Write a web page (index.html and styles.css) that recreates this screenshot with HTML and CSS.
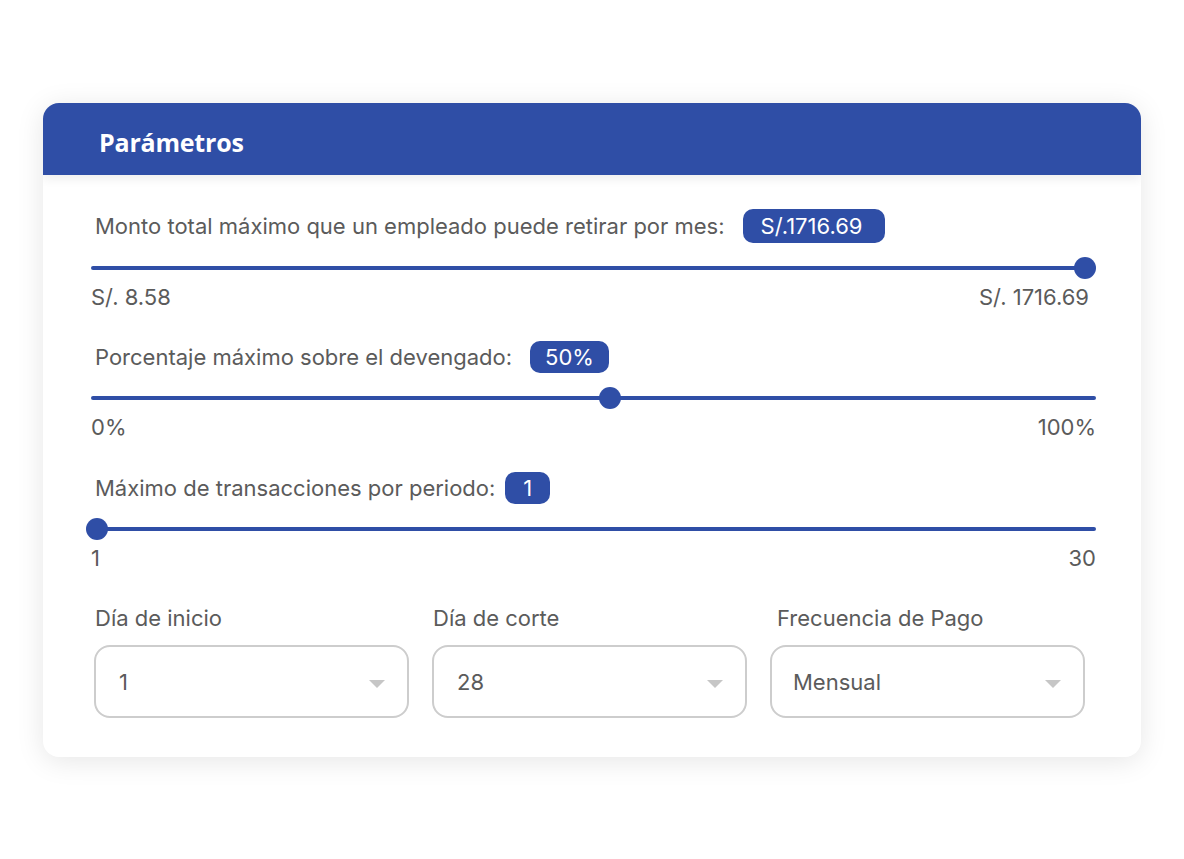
FILE: index.html
```html
<!DOCTYPE html>
<html lang="es">
<head>
<meta charset="utf-8">
<title>Parámetros</title>
<link rel="stylesheet" href="styles.css">
</head>
<body>
<div class="card">
  <div class="card-header"><h1 class="title">Parámetros</h1></div>
  <div class="card-body">
    <div class="param">
      <div class="param-row">
        <span class="param-label">Monto total máximo que un empleado puede retirar por mes:</span>
        <span class="badge badge-wide">S/.1716.69</span>
      </div>
      <div class="slider slider-short">
        <div class="track"></div>
        <div class="thumb" style="left: 100%"></div>
      </div>
      <div class="range-labels range-short">
        <span>S/. 8.58</span><span>S/. 1716.69</span>
      </div>
    </div>

    <div class="param param-next">
      <div class="param-row">
        <span class="param-label">Porcentaje máximo sobre el devengado:</span>
        <span class="badge badge-mid">50%</span>
      </div>
      <div class="slider">
        <div class="track"></div>
        <div class="thumb" style="left: 51.6%"></div>
      </div>
      <div class="range-labels">
        <span>0%</span><span>100%</span>
      </div>
    </div>

    <div class="param param-next param-last">
      <div class="param-row">
        <span class="param-label param-label-close">Máximo de transacciones por periodo:</span>
        <span class="badge badge-narrow">1</span>
      </div>
      <div class="slider slider-start">
        <div class="track"></div>
        <div class="thumb" style="left: 0.6%"></div>
      </div>
      <div class="range-labels">
        <span>1</span><span>30</span>
      </div>
    </div>

    <div class="selects">
      <div class="field">
        <div class="field-label">Día de inicio</div>
        <div class="select"><span>1</span><i class="arrow"></i></div>
      </div>
      <div class="field">
        <div class="field-label">Día de corte</div>
        <div class="select"><span>28</span><i class="arrow"></i></div>
      </div>
      <div class="field">
        <div class="field-label field-label-shift">Frecuencia de Pago</div>
        <div class="select select-tight"><span>Mensual</span><i class="arrow"></i></div>
      </div>
    </div>
  </div>
</div>
</body>
</html>
```

FILE: styles.css
```css
* { box-sizing: border-box; }
html, body { margin: 0; padding: 0; background: #ffffff; }
body {
  font-family: "Inter", "Liberation Sans", sans-serif;
  color: #5b5b5b;
  padding: 103px 0 104px 43px;
}
.card {
  width: 1098px;
  background: #ffffff;
  border-radius: 16px;
  box-shadow: 0 4px 28px rgba(0, 0, 0, 0.10);
  overflow: hidden;
}
.card-header {
  background: #2f4ea6;
  height: 72px;
  display: flex;
  align-items: center;
  padding-left: 56px;
  box-shadow: 0 4px 10px rgba(0, 0, 0, 0.07);
  position: relative;
}
.title {
  margin: 0;
  font-family: "Open Sans", "Lato", sans-serif;
  font-weight: 700;
  font-size: 25px;
  letter-spacing: -0.2px;
  color: #ffffff;
  padding-top: 6px;
}
.card-body {
  padding: 34px 45px 39px 48px;
}
.param-row {
  display: flex;
  align-items: center;
  height: 34px;
  padding-left: 4px;
}
.param-next .param-row { height: 32px; margin-top: 32px; }
.param-last .param-row { margin-top: 33px; }
.param-label {
  font-size: 22px;
  line-height: 24px;
  color: #5b5b5b;
  margin-right: 18px;
}
.param-label-close { margin-right: 10px; }
.badge {
  display: inline-flex;
  align-items: center;
  height: 100%;
  padding: 0 18px;
  background: #2f4ea6;
  color: #ffffff;
  font-size: 22px;
  line-height: 24px;
  border-radius: 10px;
}
.badge-wide { padding: 0 23px 0 18px; }
.badge-mid { padding: 0 15px; }
.badge-narrow { padding: 0 18px; }
.slider {
  position: relative;
  height: 22px;
  margin-top: 14px;
}
.slider-short { width: 994px; }
.track {
  position: absolute;
  left: 0; right: 0;
  top: 9px;
  height: 4px;
  background: #2f4ea6;
  border-radius: 2px;
}
.slider-start .track { left: 6px; }
.thumb {
  position: absolute;
  top: 0;
  width: 22px;
  height: 22px;
  margin-left: -11px;
  border-radius: 50%;
  background: #2f4ea6;
}
.range-labels {
  display: flex;
  justify-content: space-between;
  font-size: 22px;
  line-height: 24px;
  margin-top: 6px;
  color: #5b5b5b;
}
.range-short { width: 998px; }
.selects {
  display: grid;
  grid-template-columns: 315px 315px 315px;
  column-gap: 23px;
  margin-top: 36px;
  margin-left: 3px;
}
.field-label {
  font-size: 22px;
  line-height: 24px;
  padding-left: 1px;
}
.field-label-shift { padding-left: 7px; }
.select {
  margin-top: 15px;
  height: 73px;
  border: 2px solid #cdcdcd;
  border-radius: 16px;
  display: flex;
  align-items: center;
  justify-content: space-between;
  padding: 0 22px 0 23px;
  font-size: 22px;
  line-height: 24px;
  color: #5b5b5b;
}
.select-tight { padding-left: 21px; }
.arrow {
  width: 0;
  height: 0;
  border-left: 8px solid transparent;
  border-right: 8px solid transparent;
  border-top: 8px solid #c6c6c6;
  margin-top: 4px;
}
```
